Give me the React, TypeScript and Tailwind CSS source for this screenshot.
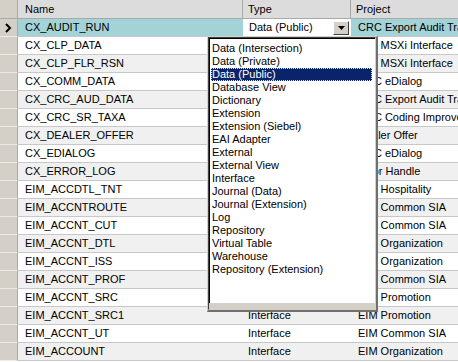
import React from "react";

const rows: { name: string; type: string; project: string }[] = [
  { name: "CX_AUDIT_RUN", type: "Data (Public)", project: "CRC Export Audit Trail" },
  { name: "CX_CLP_DATA", type: "Data (Public)", project: "EIM MSXi Interface" },
  { name: "CX_CLP_FLR_RSN", type: "Data (Public)", project: "EIM MSXi Interface" },
  { name: "CX_COMM_DATA", type: "Data (Public)", project: "CRC eDialog" },
  { name: "CX_CRC_AUD_DATA", type: "Data (Public)", project: "CRC Export Audit Trail" },
  { name: "CX_CRC_SR_TAXA", type: "Data (Public)", project: "CRC Coding Improvement" },
  { name: "CX_DEALER_OFFER", type: "Data (Public)", project: "Dealer Offer" },
  { name: "CX_EDIALOG", type: "Data (Public)", project: "CRC eDialog" },
  { name: "CX_ERROR_LOG", type: "Data (Public)", project: "Error Handle" },
  { name: "EIM_ACCDTL_TNT", type: "Interface", project: "EIM Hospitality" },
  { name: "EIM_ACCNTROUTE", type: "Interface", project: "EIM Common SIA" },
  { name: "EIM_ACCNT_CUT", type: "Interface", project: "EIM Common SIA" },
  { name: "EIM_ACCNT_DTL", type: "Interface", project: "EIM Organization" },
  { name: "EIM_ACCNT_ISS", type: "Interface", project: "EIM Organization" },
  { name: "EIM_ACCNT_PROF", type: "Interface", project: "EIM Common SIA" },
  { name: "EIM_ACCNT_SRC", type: "Interface", project: "EIM Promotion" },
  { name: "EIM_ACCNT_SRC1", type: "Interface", project: "EIM Promotion" },
  { name: "EIM_ACCNT_UT", type: "Interface", project: "EIM Common SIA" },
  { name: "EIM_ACCOUNT", type: "Interface", project: "EIM Organization" },
];

const items = [
  "Data (Intersection)",
  "Data (Private)",
  "Data (Public)",
  "Database View",
  "Dictionary",
  "Extension",
  "Extension (Siebel)",
  "EAI Adapter",
  "External",
  "External View",
  "Interface",
  "Journal (Data)",
  "Journal (Extension)",
  "Log",
  "Repository",
  "Virtual Table",
  "Warehouse",
  "Repository (Extension)",
];

export default function App() {
  return (
    <div className="relative w-[458px] h-[362px] overflow-hidden bg-white text-[11px] text-black font-['Liberation_Sans',Arial,sans-serif]">
      {/* header */}
      <div className="flex h-[19px] bg-[#dcdcdc] border-b border-[#a8a8a8]">
        <div className="w-[18px] shrink-0 border-r border-[#a8a8a8] bg-[#d4d0c8]" />
        <div className="w-[225px] shrink-0 flex items-center pl-[7px] border-r border-[#a8a8a8]">Name</div>
        <div className="w-[108px] shrink-0 flex items-center pl-[5px] border-r border-[#a8a8a8]">Type</div>
        <div className="flex-1 flex items-center pl-[5px] whitespace-nowrap">Project</div>
      </div>

      {/* rows */}
      {rows.map((r, i) => {
        const sel = i === 0;
        const bg = sel ? "bg-[#a4d3d7]" : i % 2 === 1 ? "bg-white" : "bg-[#f0f0f0]";
        return (
          <div key={r.name} className={`flex h-[18px] border-b border-[#c8c8c8] ${bg}`}>
            <div className="w-[18px] shrink-0 flex items-center justify-center bg-[#d4d0c8] border-r border-[#a8a8a8] border-b border-b-[#ecebe6] -mb-px">
              {sel && (
                <svg width="7" height="10" viewBox="0 0 7 10">
                  <path d="M1 1 L5 5 L1 9" stroke="#000" strokeWidth="2" fill="none" />
                </svg>
              )}
            </div>
            <div className="w-[225px] shrink-0 flex items-center pl-[7px] whitespace-nowrap overflow-hidden">{r.name}</div>
            {sel ? (
              <div className="w-[108px] shrink-0 flex items-center bg-white pl-[6px] pr-[2px]">
                <span className="flex-1 whitespace-nowrap">{r.type}</span>
                <div className="w-[16px] h-[14px] flex items-center justify-center bg-[#d4d0c8] border border-t-white border-l-white border-r-[#404040] border-b-[#404040]">
                  <svg width="7" height="4" viewBox="0 0 7 4">
                    <path d="M0 0 H7 L3.5 4 Z" fill="#000" />
                  </svg>
                </div>
              </div>
            ) : (
              <div className="w-[108px] shrink-0 flex items-center pl-[5px] whitespace-nowrap overflow-hidden">{r.type}</div>
            )}
            <div className="flex-1 flex items-center pl-[7px] whitespace-nowrap overflow-hidden">{r.project}</div>
          </div>
        );
      })}

      {/* dropdown list */}
      <div className="absolute left-[207px] top-[36px] w-[171px] h-[276px] flex flex-col bg-[#d4d0c8] border-t border-l border-t-[#d4d0c8] border-l-[#d4d0c8] border-r-2 border-b-2 border-r-[#707070] border-b-[#707070]">
        <div className="flex-1 flex flex-col border border-t-[#404040] border-l-[#404040] border-r-[#d4d0c8] border-b-[#d4d0c8]">
          <div className="flex-1 bg-white border-t border-l border-[#000] pt-[3px] pl-[1px] pr-[3px]">
            {items.map((it) => {
              const hi = it === "Data (Public)";
              return (
                <div
                  key={it}
                  className={`h-[13px] leading-[13px] pl-[1px] whitespace-nowrap ${
                    hi ? "bg-[#0a246a] text-white outline outline-1 outline-dotted outline-[#f5e6a0] -outline-offset-1" : ""
                  }`}
                >
                  {it}
                </div>
              );
            })}
          </div>
          <div className="h-[6px] bg-[#d4d0c8]" />
        </div>
      </div>
    </div>
  );
}
